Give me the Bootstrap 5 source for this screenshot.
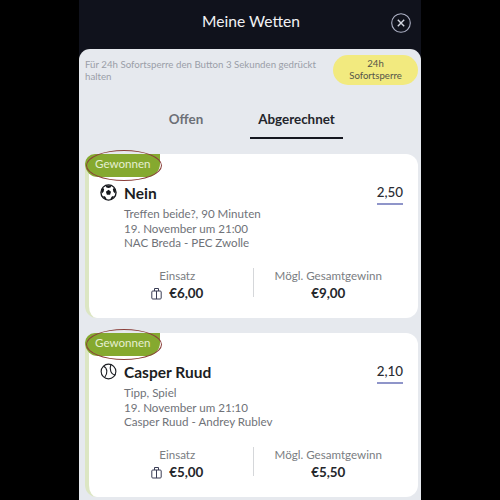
<!DOCTYPE html>
<html lang="de">
<head>
<meta charset="utf-8">
<title>Meine Wetten</title>
<link rel="stylesheet" href="https://cdn.jsdelivr.net/npm/bootstrap@5.3.0/dist/css/bootstrap.min.css">
<style>
html,body{height:500px;overflow:hidden;background:#000;}
body{font-family:Lato,"Liberation Sans",sans-serif;color:#1b1d22;}
.phone{width:342px;height:500px;margin-left:79px;background:#10121c;overflow:hidden;}
.topbar{height:49px;}
.topbar h1{font-size:15.6px;font-weight:400;color:#f1f1f3;margin:0;width:100%;text-align:center;padding:0 0 6px 2px;}
.closer{position:absolute;right:10px;top:13px;width:20px;height:20px;}
.sheet{height:451px;background:#e6e9ee;border-radius:11px 11px 0 0;padding:6px 3px 0 6px;}
.lockbar{height:30px;}
.locktext{font-size:9.7px;line-height:12px;color:#9a9ea8;width:238px;}
.lockbtn{width:85px;height:30px;border-radius:15px;background:#f2ea7f;font-size:9.6px;line-height:12px;color:#55554a;text-align:center;}
.tabrow{height:49px;margin-top:20px;padding-left:54px;}
.tabitem{font-size:13.4px;font-weight:700;line-height:28px;height:34px;text-align:center;color:#6c6f76;}
.tabitem.first{width:94px;margin-right:17px;}
.tabitem.on{width:93px;color:#23252b;border-bottom:2px solid #15171f;}
.betcard{position:relative;background:#fff;border-radius:12px;height:164px;padding:29px 15px 0 11px;margin-bottom:15px;border-left:4px solid #dce6c3;}
.wonflag{position:absolute;left:-4px;top:0;height:23px;width:75px;background:#85a92f;color:#e6efd2;font-size:11.6px;line-height:20px;padding-left:10px;border-radius:12px 0 16px 16px;}
.ring{position:absolute;left:-3px;top:-4px;width:76px;height:31px;border:1px solid #8a3f3a;border-radius:50%;}
.sporticon{width:17px;height:17px;margin-top:1px;flex:none;}
.pick{font-size:15.5px;font-weight:700;line-height:20px;color:#1b1d22;margin-left:7px;}
.oddvalue{font-size:13.4px;font-weight:500;line-height:18px;color:#2a2c33;border-bottom:2px solid #8f95c9;padding-bottom:2px;}
.infolines{font-size:11.6px;line-height:14.5px;color:#6f7278;margin:2px 0 0 24px;}
.stakes{margin-top:17px;height:29px;padding-left:2px;}
.stakecell{width:50%;text-align:center;}
.stakecell+.stakecell{border-left:1px solid #d5d7da;}
.stakelabel{font-size:11.6px;line-height:15px;color:#7a7d82;}
.stakevalue{font-size:13.4px;font-weight:700;line-height:20px;color:#24262b;}
.giftico{width:11px;height:13px;margin-right:7px;vertical-align:-2px;}
</style>
</head>
<body>
<div class="phone">
  <div class="topbar position-relative d-flex align-items-center">
    <h1>Meine Wetten</h1>
    <svg class="closer" viewBox="0 0 20 20" fill="none" stroke="#aeb2c6" stroke-width="1.1"><circle cx="10" cy="10" r="9.3"/><path d="M6.8 6.8 13.2 13.2M13.2 6.8 6.8 13.2" stroke="#d5d8e2" stroke-width="1.4"/></svg>
  </div>
  <div class="sheet">
    <div class="lockbar d-flex align-items-center justify-content-between">
      <div class="locktext">Für 24h Sofortsperre den Button 3 Sekunden gedrückt halten</div>
      <div class="lockbtn d-flex flex-column justify-content-center">24h<br>Sofortsperre</div>
    </div>
    <div class="tabrow d-flex">
      <div class="tabitem first">Offen</div>
      <div class="tabitem on">Abgerechnet</div>
    </div>
    <div class="betcard">
      <div class="wonflag">Gewonnen</div><div class="ring"></div>
      <div class="d-flex align-items-start">
        <svg class="sporticon" viewBox="0 0 18 18"><circle cx="9" cy="9" r="8" fill="#fff" stroke="#15171c" stroke-width="1.4"/><path d="M9 6.2 11.7 8.2 10.7 11.4H7.3L6.3 8.2Z" fill="#15171c"/><path d="M5.8 1.6H12.2L11.2 3.6 9 4.3 6.8 3.6ZM1.2 7.2 3.2 4 4.4 5.6 3.8 8.2 2 10ZM16.8 7.2 14.8 4 13.6 5.6 14.2 8.2 16 10ZM3.2 13 5.2 13 6.8 15.4 6.6 16.8 4 15.2ZM14.8 13 12.8 13 11.2 15.4 11.4 16.8 14 15.2Z" fill="#15171c"/></svg>
        <div class="pick flex-grow-1">Nein</div>
        <div class="oddvalue">2,50</div>
      </div>
      <div class="infolines">Treffen beide?, 90 Minuten<br>19. November um 21:00<br>NAC Breda - PEC Zwolle</div>
      <div class="stakes d-flex">
        <div class="stakecell"><div class="stakelabel">Einsatz</div><div class="stakevalue"><svg class="giftico" viewBox="0 0 11 13" fill="none" stroke="#3a3d55" stroke-width="1"><rect x="0.8" y="4" width="9.4" height="8" rx="1"/><path d="M5.5 4V12M3.5 4V1.5H7.5V4"/></svg>€6,00</div></div>
        <div class="stakecell"><div class="stakelabel">Mögl. Gesamtgewinn</div><div class="stakevalue">€9,00</div></div>
      </div>
    </div>
    <div class="betcard">
      <div class="wonflag">Gewonnen</div><div class="ring"></div>
      <div class="d-flex align-items-start">
        <svg class="sporticon" viewBox="0 0 18 18" fill="none" stroke="#1d1f24" stroke-width="1.2"><circle cx="9" cy="9" r="7.8"/><path d="M3.6 3.4C8 5 8.5 11 4.8 15.6M11.5 1.6C9.8 6.5 11.5 12.5 16.2 12.6"/></svg>
        <div class="pick flex-grow-1">Casper Ruud</div>
        <div class="oddvalue">2,10</div>
      </div>
      <div class="infolines">Tipp, Spiel<br>19. November um 21:10<br>Casper Ruud - Andrey Rublev</div>
      <div class="stakes d-flex">
        <div class="stakecell"><div class="stakelabel">Einsatz</div><div class="stakevalue"><svg class="giftico" viewBox="0 0 11 13" fill="none" stroke="#3a3d55" stroke-width="1"><rect x="0.8" y="4" width="9.4" height="8" rx="1"/><path d="M5.5 4V12M3.5 4V1.5H7.5V4"/></svg>€5,00</div></div>
        <div class="stakecell"><div class="stakelabel">Mögl. Gesamtgewinn</div><div class="stakevalue">€5,50</div></div>
      </div>
    </div>
  </div>
</div>
<script src="https://cdn.jsdelivr.net/npm/bootstrap@5.3.0/dist/js/bootstrap.bundle.min.js"></script>
</body>
</html>
